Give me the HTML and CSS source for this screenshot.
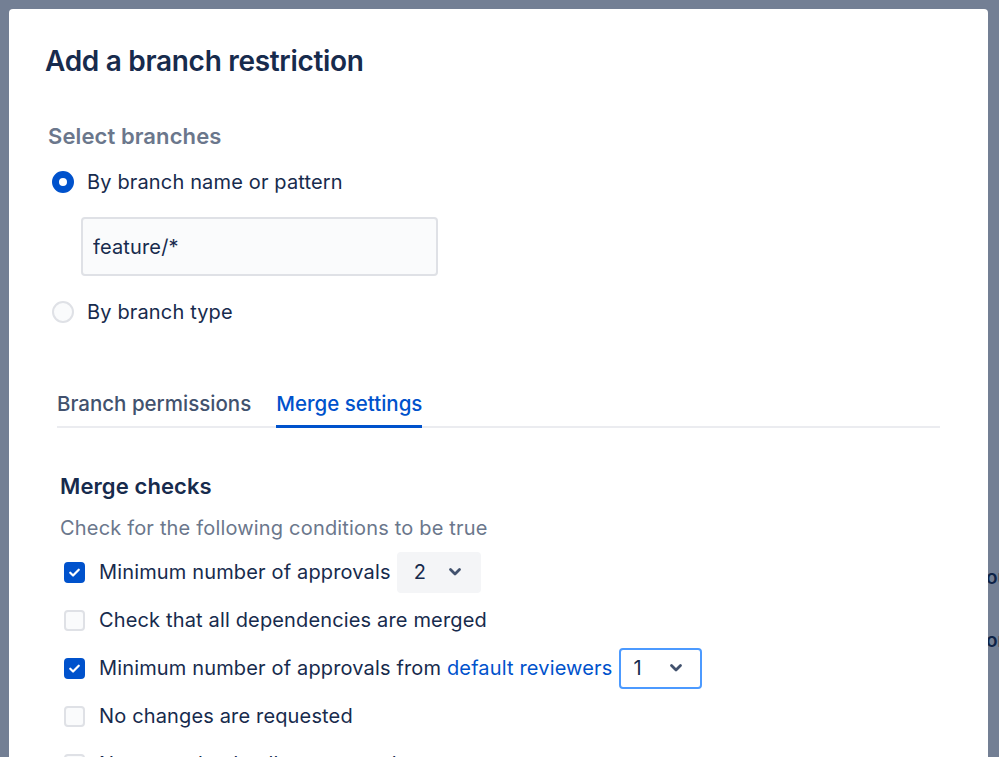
FILE: index.html
```html
<!DOCTYPE html>
<html lang="en">
<head>
    <meta charset="UTF-8">
    <meta name="viewport" content="width=device-width, initial-scale=1.0">
    <title>Add a branch restriction</title>
    <link rel="stylesheet" href="styles.css">
</head>
<body>
    <div class="page">
        <div class="page-line">out</div>
        <div class="page-line">or</div>
    </div>

    <div class="blanket"></div>

    <div class="modal">
        <h1 class="modal-title">Add a branch restriction</h1>

        <div class="section">
            <h2 class="section-title">Select branches</h2>

            <label class="radio-row">
                <span class="radio checked"></span>
                <span>By branch name or pattern</span>
            </label>
            <div class="pattern-field">
                <input type="text" class="text-input" value="feature/*">
            </div>
            <label class="radio-row">
                <span class="radio"></span>
                <span>By branch type</span>
            </label>
        </div>

        <div class="tabs">
            <div class="tab">Branch permissions</div>
            <div class="tab active">Merge settings</div>
        </div>

        <div class="merge-checks">
            <h3 class="checks-title">Merge checks</h3>
            <p class="checks-desc">Check for the following conditions to be true</p>

            <div class="check-row">
                <span class="checkbox checked">
                    <svg viewBox="0 0 20 20" width="17" height="17"><path d="M5 10.3l3.3 3.2L15 6.8" fill="none" stroke="#fff" stroke-width="2.6" stroke-linecap="round" stroke-linejoin="round"/></svg>
                </span>
                <span class="check-label">Minimum number of approvals</span>
                <div class="select">
                    <span>2</span>
                    <svg class="chevron" viewBox="0 0 14 10" width="14" height="10"><polyline points="2.5,2.5 7,7 11.5,2.5" fill="none" stroke="#42526e" stroke-width="2.8" stroke-linecap="round" stroke-linejoin="round"/></svg>
                </div>
            </div>

            <div class="check-row">
                <span class="checkbox"></span>
                <span class="check-label">Check that all dependencies are merged</span>
            </div>

            <div class="check-row">
                <span class="checkbox checked">
                    <svg viewBox="0 0 20 20" width="17" height="17"><path d="M5 10.3l3.3 3.2L15 6.8" fill="none" stroke="#fff" stroke-width="2.6" stroke-linecap="round" stroke-linejoin="round"/></svg>
                </span>
                <span class="check-label">Minimum number of approvals from <a href="#" class="link">default reviewers</a></span>
                <div class="select focused">
                    <span>1</span>
                    <svg class="chevron" viewBox="0 0 14 10" width="14" height="10"><polyline points="2.5,2.5 7,7 11.5,2.5" fill="none" stroke="#42526e" stroke-width="2.8" stroke-linecap="round" stroke-linejoin="round"/></svg>
                </div>
            </div>

            <div class="check-row">
                <span class="checkbox"></span>
                <span class="check-label">No changes are requested</span>
            </div>

            <div class="check-row">
                <span class="checkbox"></span>
                <span class="check-label">No unresolved pull request tasks</span>
            </div>
        </div>
    </div>
</body>
</html>
```

FILE: styles.css
```css
body {
    margin: 0;
    font-family: Inter, "Noto Sans", sans-serif;
    color: #172b4d;
    background-color: #fff;
    height: 100vh;
    overflow: hidden;
}

.page {
    padding: 566px 0 0 986px;
    font-size: 19px;
    font-weight: 600;
    color: #172b4d;
    white-space: nowrap;
}

.page-line {
    height: 63px;
}

.blanket {
    position: absolute;
    inset: 0;
    background-color: rgba(9, 30, 66, 0.57);
}

.modal {
    position: absolute;
    top: 9px;
    left: 9px;
    width: 979px;
    height: 900px;
    background-color: #fff;
    border-radius: 4px;
    box-sizing: border-box;
    padding: 33px 48px 0 36px;
}

.modal-title {
    margin: 0;
    font-size: 28px;
    font-weight: 600;
    letter-spacing: -0.3px;
    line-height: 38px;
}

.section {
    padding: 41px 0 0 3px;
}

.section-title {
    margin: 0 0 16px 0;
    font-size: 22px;
    font-weight: 600;
    color: #6b778c;
    line-height: 30px;
    letter-spacing: 0.1px;
}

.radio-row {
    display: flex;
    align-items: center;
    gap: 13px;
    font-size: 20px;
    letter-spacing: 0.15px;
    height: 30px;
    padding-left: 4px;
}

.radio {
    width: 22px;
    height: 22px;
    border-radius: 50%;
    box-sizing: border-box;
    border: 2px solid #dfe1e6;
    background-color: #fafbfc;
}

.radio.checked {
    border: 7px solid #0052cc;
    background-color: #fff;
}

.pattern-field {
    padding: 20px 0 21px 33px;
}

.text-input {
    width: 357px;
    height: 59px;
    box-sizing: border-box;
    border: 2px solid #dfe1e6;
    border-radius: 4px;
    background-color: #fafbfc;
    padding: 0 10px;
    font-family: inherit;
    font-size: 20px;
    letter-spacing: 0.15px;
    color: #172b4d;
    outline: none;
}

.tabs {
    display: flex;
    gap: 25px;
    margin: 64px 0 0 12px;
    border-bottom: 2px solid #ebecf0;
    width: 883px;
}

.tab {
    font-size: 20.5px;
    font-weight: 500;
    color: #42526e;
    padding-bottom: 9px;
    margin-bottom: -2px;
    border-bottom: 3px solid transparent;
}

.tab.active {
    color: #0052cc;
    border-bottom-color: #0052cc;
}

.merge-checks {
    padding: 43px 0 0 15px;
}

.checks-title {
    margin: 0;
    font-size: 22px;
    font-weight: 600;
    line-height: 30px;
    letter-spacing: 0.1px;
}

.checks-desc {
    margin: 13px 0 6px 0;
    font-size: 20px;
    letter-spacing: 0.18px;
    color: #6b778c;
    line-height: 28px;
}

.check-row {
    display: flex;
    align-items: center;
    height: 48px;
    font-size: 20px;
    letter-spacing: 0.15px;
}

.checkbox {
    width: 21px;
    height: 21px;
    box-sizing: border-box;
    margin: 0 14px 0 4px;
    border: 2px solid #dfe1e6;
    border-radius: 4px;
    background-color: #fafbfc;
    display: flex;
    align-items: center;
    justify-content: center;
}

.checkbox.checked {
    background-color: #0052cc;
    border-color: #0052cc;
}

.check-label {
    white-space: nowrap;
}

.link {
    color: #0052cc;
    text-decoration: none;
}

.select {
    display: flex;
    align-items: center;
    justify-content: space-between;
    width: 84px;
    height: 41px;
    box-sizing: border-box;
    margin-left: 6px;
    padding: 0 17px 0 15px;
    background-color: #f4f5f7;
    border: 2px solid #f4f5f7;
    border-radius: 4px;
}

.select.focused {
    background-color: #fff;
    border-color: #4c9aff;
    width: 83px;
    height: 41px;
    margin-left: 7px;
    padding-left: 12px;
}
```
